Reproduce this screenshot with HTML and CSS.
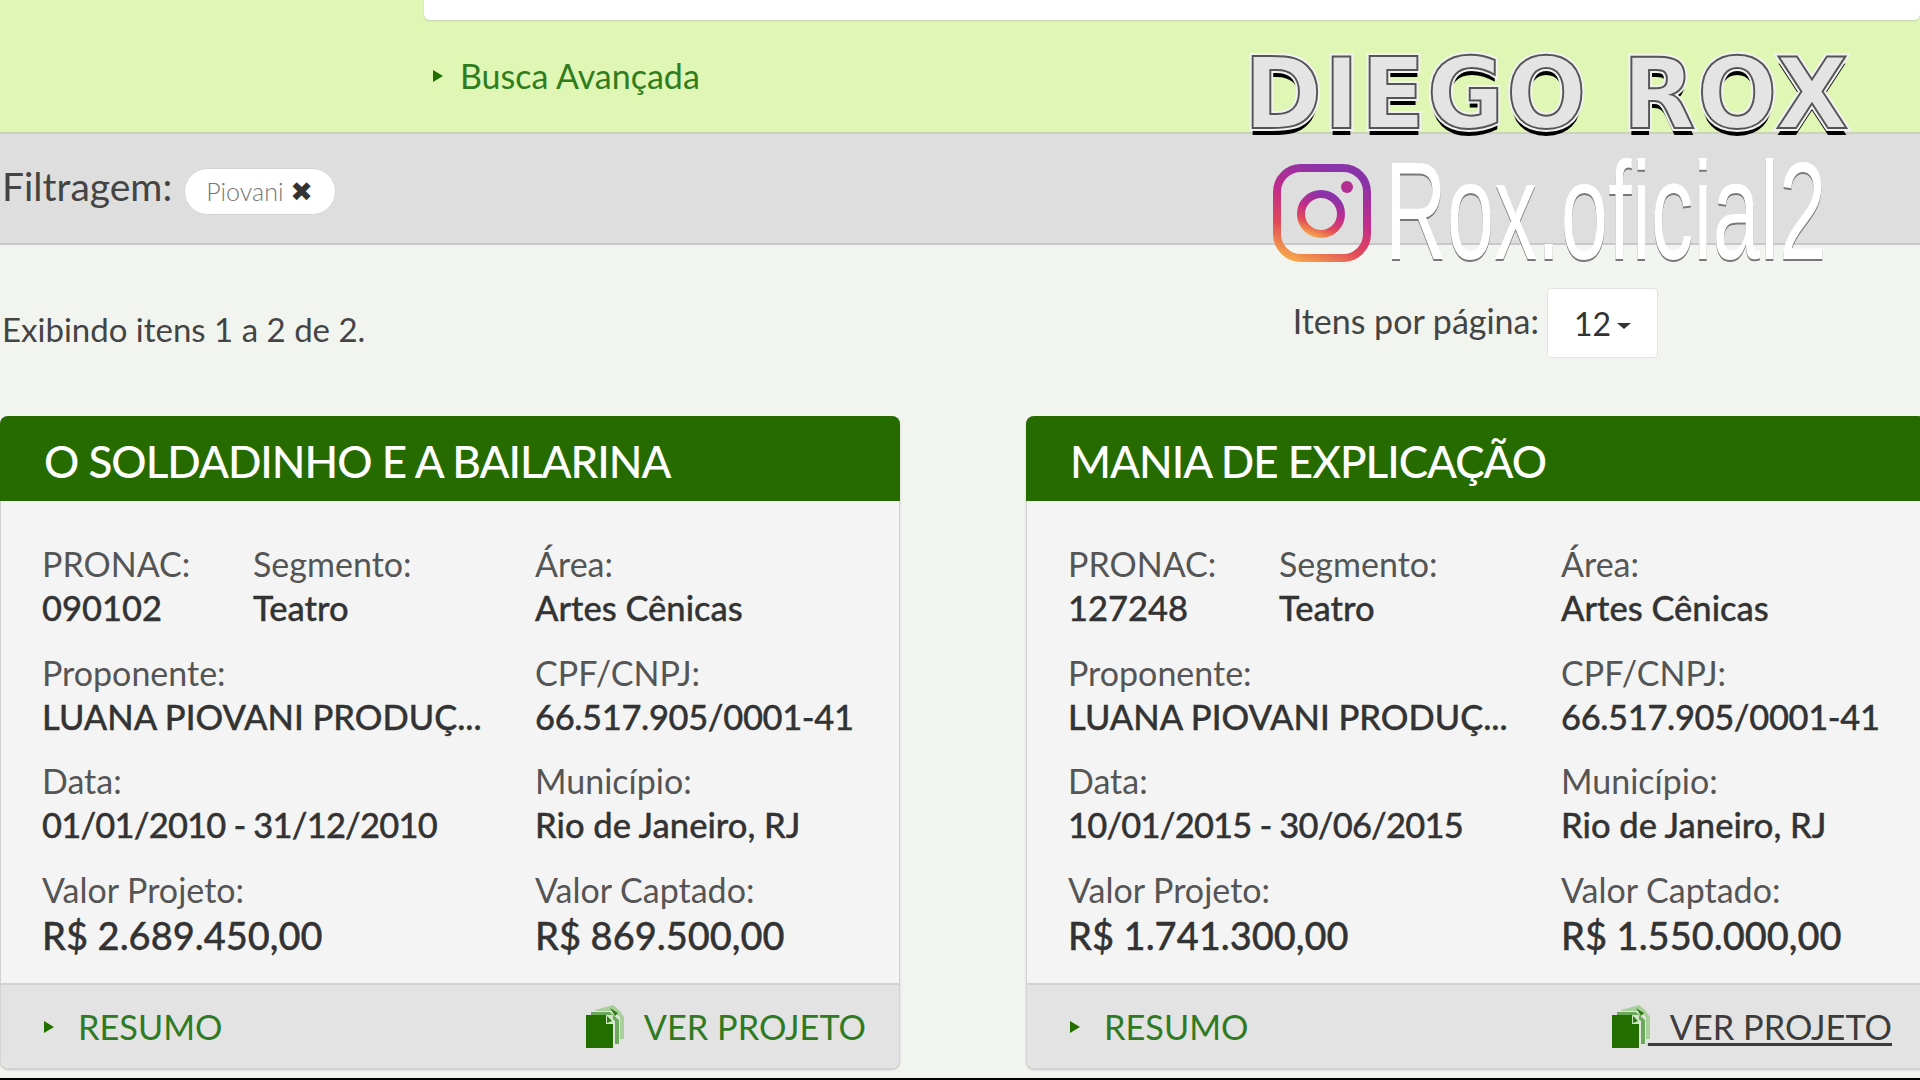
FILE: index.html
```html
<!DOCTYPE html>
<html lang="pt-BR">
<head>
  <meta charset="UTF-8" />
  <title>Projetos</title>
  <link rel="stylesheet" href="styles.css">
</head>
<body>
  <div class="search-bar">
    <div class="search-box"></div>
    <a class="advanced"><span class="arrow"></span>Busca Avançada</a>
  </div>

  <div class="filter-bar">
    <span class="filter-label">Filtragem:</span>
    <span class="chip">Piovani <b class="chip-x">✖</b></span>
  </div>

  <div class="list-head">
    <span class="showing">Exibindo itens 1 a 2 de 2.</span>
    <div class="per-page">
      <span>Itens por página:</span>
      <div class="dropdown">12<span class="caret"></span></div>
    </div>
  </div>

  <div class="cards">
    <div class="card">
      <h2 class="card-title">O SOLDADINHO E A BAILARINA</h2>
      <div class="card-body">
        <div class="field"><label>PRONAC:</label><strong>090102</strong></div>
        <div class="field"><label>Segmento:</label><strong>Teatro</strong></div>
        <div class="field"><label>Área:</label><strong>Artes Cênicas</strong></div>
        <div class="field wide"><label>Proponente:</label><strong>LUANA PIOVANI PRODUÇ...</strong></div>
        <div class="field cpf"><label>CPF/CNPJ:</label><strong>66.517.905/0001-41</strong></div>
        <div class="field wide date"><label>Data:</label><strong>01/01/2010 - 31/12/2010</strong></div>
        <div class="field"><label>Município:</label><strong>Rio de Janeiro, RJ</strong></div>
        <div class="field wide money"><label>Valor Projeto:</label><strong>R$ 2.689.450,00</strong></div>
        <div class="field money"><label>Valor Captado:</label><strong>R$ 869.500,00</strong></div>
      </div>
      <div class="card-foot">
        <a class="resumo"><span class="arrow"></span>RESUMO</a>
        <a class="ver">
          <svg class="doc-icon" viewBox="0 0 38 43"><path fill="#a9cf9a" d="M9 5 L27 0 L33 5 L38 12 V34 H34 V12 L27 6 H9 Z"/><path fill="#6da95a" d="M5 7 H24 L33 15 V39 H29 V16 L22 10 H5 Z"/><path fill="#2f7d12" d="M24 3 L32 8 L29 11 Z M19 9 L27 14 L23 17 Z"/><rect x="0" y="10" width="27" height="33" fill="#226f00"/><path fill="#cfe5c4" d="M20 10 H27 V19 H20 Z"/><path fill="#2f7d12" d="M21 11 L26 16 L21 18 Z"/></svg>
          <span>&nbsp;&nbsp;&thinsp;VER PROJETO</span>
        </a>
      </div>
    </div>

    <div class="card">
      <h2 class="card-title">MANIA DE EXPLICAÇÃO</h2>
      <div class="card-body">
        <div class="field"><label>PRONAC:</label><strong>127248</strong></div>
        <div class="field"><label>Segmento:</label><strong>Teatro</strong></div>
        <div class="field"><label>Área:</label><strong>Artes Cênicas</strong></div>
        <div class="field wide"><label>Proponente:</label><strong>LUANA PIOVANI PRODUÇ...</strong></div>
        <div class="field cpf"><label>CPF/CNPJ:</label><strong>66.517.905/0001-41</strong></div>
        <div class="field wide date"><label>Data:</label><strong>10/01/2015 - 30/06/2015</strong></div>
        <div class="field"><label>Município:</label><strong>Rio de Janeiro, RJ</strong></div>
        <div class="field wide money"><label>Valor Projeto:</label><strong>R$ 1.741.300,00</strong></div>
        <div class="field money"><label>Valor Captado:</label><strong>R$ 1.550.000,00</strong></div>
      </div>
      <div class="card-foot">
        <a class="resumo"><span class="arrow"></span>RESUMO</a>
        <a class="ver hover">
          <svg class="doc-icon" viewBox="0 0 38 43"><path fill="#a9cf9a" d="M9 5 L27 0 L33 5 L38 12 V34 H34 V12 L27 6 H9 Z"/><path fill="#6da95a" d="M5 7 H24 L33 15 V39 H29 V16 L22 10 H5 Z"/><path fill="#2f7d12" d="M24 3 L32 8 L29 11 Z M19 9 L27 14 L23 17 Z"/><rect x="0" y="10" width="27" height="33" fill="#226f00"/><path fill="#cfe5c4" d="M20 10 H27 V19 H20 Z"/><path fill="#2f7d12" d="M21 11 L26 16 L21 18 Z"/></svg>
          <span>&nbsp;&nbsp;&thinsp;VER PROJETO</span>
        </a>
      </div>
    </div>
  </div>

  <div class="bottom-line"></div>

  <!-- watermark over the video -->
  <div class="watermark">
    <div class="wm-name" data-text="DIEGO ROX">DIEGO ROX</div>
    <div class="wm-insta">
      <svg class="insta-icon" viewBox="0 0 98 98">
        <defs>
          <linearGradient id="instaGrad" x1="0.15" y1="1" x2="0.55" y2="0">
            <stop offset="0" stop-color="#f5a54a"/>
            <stop offset="0.3" stop-color="#e0485a"/>
            <stop offset="0.62" stop-color="#c12c8a"/>
            <stop offset="1" stop-color="#8a33a8"/>
          </linearGradient>
        </defs>
        <rect x="4" y="4" width="90" height="90" rx="24" fill="none" stroke="url(#instaGrad)" stroke-width="8"/>
        <circle cx="48" cy="50" r="20" fill="none" stroke="url(#instaGrad)" stroke-width="8"/>
        <circle cx="74" cy="23" r="6" fill="#b42d92"/>
      </svg>
      <span class="wm-handle">Rox.oficial2</span>
    </div>
  </div>
</body>
</html>
```

FILE: styles.css
```css
* {
  box-sizing: border-box;
}

html,
body {
  margin: 0;
  height: 1080px;
  overflow: hidden;
}

body {
  position: relative;
  width: 1920px;
  font-family: Lato, sans-serif;
  background: #f2f5ef;
  color: #444;
}

a {
  text-decoration: none;
}

.arrow {
  display: inline-block;
  width: 0;
  height: 0;
  border-left: 10px solid #226f00;
  border-top: 6px solid transparent;
  border-bottom: 6px solid transparent;
}

/* search */
.search-bar {
  height: 134px;
  background: #dff6b4;
  border-bottom: 2px solid #c9d3bb;
}

.search-box {
  height: 20px;
  margin-left: 424px;
  background: #fff;
  border-radius: 0 0 6px 6px;
  box-shadow: 0 1px 2px #c4ceb6;
}

.advanced {
  display: flex;
  align-items: center;
  margin: 34px 0 0 433px;
  font-size: 34px;
  line-height: 44px;
  color: #2f7d1e;
}

.advanced .arrow {
  margin-right: 17px;
}

/* filter */
.filter-bar {
  display: flex;
  align-items: center;
  height: 111px;
  padding-left: 2px;
  background: #dedede;
  border-bottom: 2px solid #c8c8c8;
}

.filter-label {
  margin-bottom: 6px;
  font-size: 39px;
  color: #444;
}

.chip {
  margin: 6px 0 0 12px;
  width: 152px;
  height: 47px;
  padding-left: 21px;
  background: #fff;
  border: 1px solid #d5d5d5;
  border-radius: 24px;
  font-size: 25px;
  font-weight: 300;
  line-height: 45px;
  color: #777;
  white-space: nowrap;
}

.chip-x {
  font-size: 27px;
  color: #333;
  font-family: "DejaVu Sans", sans-serif;
}

/* list header */
.list-head {
  display: flex;
  justify-content: space-between;
  height: 171px;
  padding-top: 43px;
  padding-left: 2px;
}

.showing {
  margin-top: 19px;
  font-size: 33px;
  line-height: 44px;
}

.per-page {
  display: flex;
  align-items: center;
  gap: 8px;
  height: 70px;
  margin-right: 262px;
  font-size: 34px;
}

.per-page > span {
  margin-top: -5px;
}

.dropdown {
  display: flex;
  align-items: center;
  justify-content: center;
  gap: 6px;
  width: 111px;
  height: 70px;
  background: #fff;
  border: 1px solid #e2e4df;
  border-radius: 4px;
  font-size: 32px;
  color: #333;
}

.caret {
  width: 0;
  height: 0;
  margin-top: 5px;
  border-top: 6px solid #333;
  border-left: 7px solid transparent;
  border-right: 7px solid transparent;
}

/* cards */
.cards {
  display: flex;
  gap: 126px;
}

.card {
  flex: 0 0 900px;
  height: 653px;
  display: flex;
  flex-direction: column;
  background: #f4f4f4;
  border: 1px solid #d2d2d2;
  border-top: none;
  border-radius: 8px;
  box-shadow: 0 1px 2px #c4c4c4;
}

.card-title {
  height: 85px;
  margin: 0 -1px;
  padding-left: 44px;
  background: #266b00;
  border-radius: 8px 8px 0 0;
  font-size: 44px;
  font-weight: 500;
  line-height: 90px;
  color: #fff;
  letter-spacing: -1px;
}

.card-body {
  flex: 1;
  display: grid;
  grid-template-columns: 211px 282px 1fr;
  grid-auto-rows: 88px;
  row-gap: 20.6px;
  padding: 41px 0 0 41px;
}

.field label {
  display: block;
  font-size: 34px;
  line-height: 44px;
  color: #555;
}

.field strong {
  display: block;
  font-size: 34.5px;
  font-weight: 500;
  line-height: 44px;
  color: #333;
  white-space: nowrap;
  -webkit-text-stroke: 0.35px #333;
}

.field.wide {
  grid-column: span 2;
}

.field.date strong {
  letter-spacing: -0.8px;
}

.field.cpf strong {
  letter-spacing: -0.35px;
}

.field.money strong {
  font-size: 38px;
  line-height: 46px;
}

.card-foot {
  display: flex;
  align-items: center;
  justify-content: space-between;
  height: 85px;
  padding: 0 33px 0 43px;
  background: #e3e3e3;
  border-top: 2px solid #d2d2d2;
  border-radius: 0 0 8px 8px;
  font-size: 34.3px;
  color: #2f7a22;
}

.resumo {
  display: flex;
  align-items: center;
}

.resumo .arrow {
  margin-right: 24px;
}

.ver {
  display: flex;
  align-items: center;
}

.doc-icon {
  width: 38px;
  height: 43px;
  margin-right: -2px;
}

.ver.hover {
  color: #3c3c3c;
}

.ver.hover span {
  text-decoration: underline;
  text-decoration-thickness: 3px;
  text-underline-offset: 3px;
}

.bottom-line {
  position: absolute;
  left: 0;
  right: 0;
  bottom: 0;
  height: 2px;
  background: #000;
}

/* watermark */
.watermark {
  position: absolute;
  left: 1244px;
  top: 48px;
}

.wm-name {
  position: relative;
  font-family: "DejaVu Sans", sans-serif;
  font-size: 98px;
  font-weight: 700;
  line-height: 92px;
  letter-spacing: 2px;
  white-space: nowrap;
  color: #f2f2f2;
  -webkit-text-stroke: 6px #f2f2f2;
  text-shadow: 0 7px 0 #000;
  transform: scaleX(0.96);
  transform-origin: left top;
}

/* inner line of the chrome lettering */
.wm-name::after {
  content: attr(data-text);
  position: absolute;
  left: 0;
  top: 0;
  color: #e4e4e4;
  -webkit-text-stroke: 2px #555;
  text-shadow: none;
}

.wm-insta {
  display: flex;
  align-items: center;
  margin: 24px 0 0 29px;
}

.insta-icon {
  width: 98px;
  height: 98px;
}

.wm-handle {
  margin: -5px 0 0 14px;
  font-family: "Liberation Sans", sans-serif;
  font-size: 140px;
  line-height: 98px;
  color: #fff;
  text-shadow: 0 2px 0 #777;
  transform: scaleX(0.61);
  transform-origin: left center;
  white-space: nowrap;
}
```
